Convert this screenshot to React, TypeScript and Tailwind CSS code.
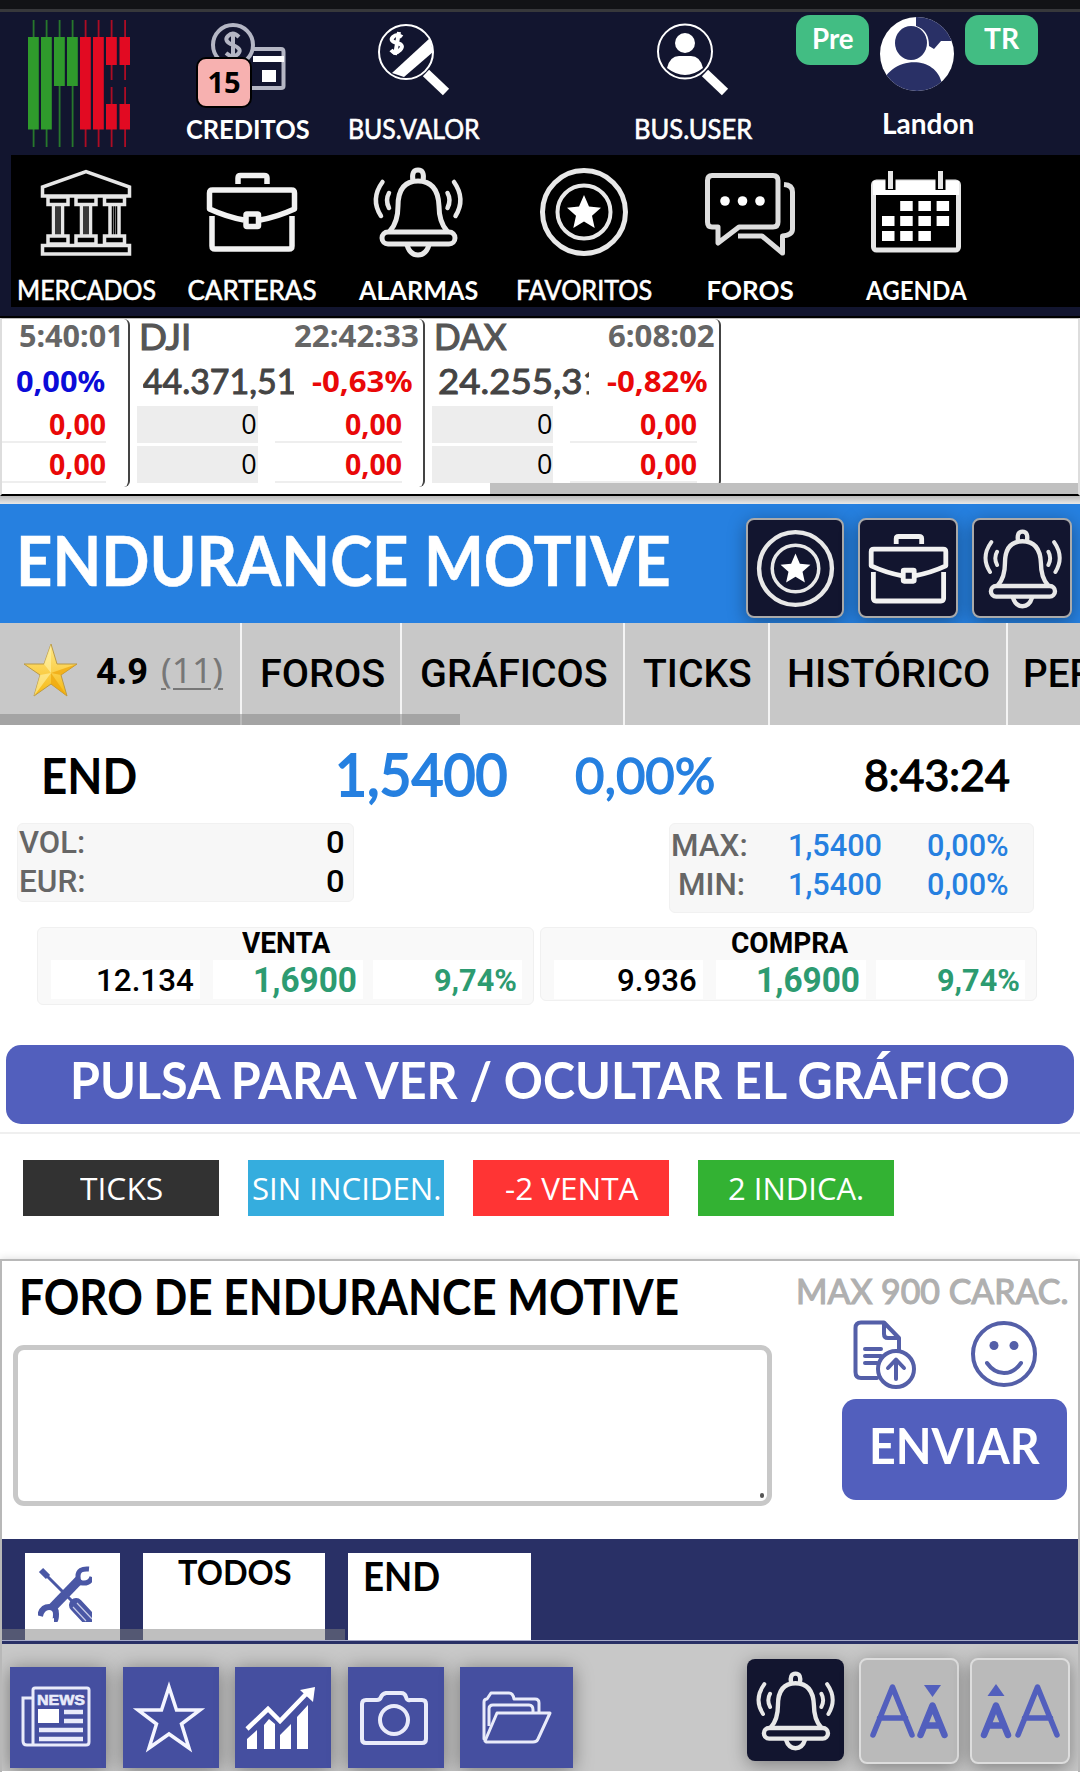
import { useLayoutEffect, useRef, useState, type ReactNode } from "react";

/* Single line of text, condensed or widened to fill a given width. */
function T({ w, className = "", children }: { w: number; className?: string; children: ReactNode }) {
  const ref = useRef<HTMLSpanElement>(null);
  const [k, setK] = useState(1);
  useLayoutEffect(() => {
    if (ref.current) setK(w / ref.current.offsetWidth);
  }, [w]);
  return (
    <div className={"shrink-0 whitespace-nowrap " + className} style={{ width: w }}>
      <span ref={ref} className="inline-block origin-left" style={{ transform: `scaleX(${k})` }}>
        {children}
      </span>
    </div>
  );
}

function Candles() {
  const xs = [28, 41, 54, 67, 80, 93, 106, 119.5];
  return (
    <svg className="h-[127px] w-[102px]" viewBox="28 20 102 127">
      {xs.map((x, i) => {
        const c = i < 4 ? "#2f9a2c" : "#e20a22";
        return (
          <g key={x} fill={c}>
            {i < 6 ? (
              <rect x={x + 4.7} y="20" width="1.8" height="127" opacity=".75" />
            ) : (
              <>
                <rect x={x + 4.7} y="20" width="1.8" height="60" opacity=".75" />
                <rect x={x + 4.7} y="87" width="1.8" height="60" opacity=".75" />
              </>
            )}
            {i < 6 ? (
              <rect x={x} y="37" width="10.8" height={i === 2 || i === 3 ? 49 : 92.5} />
            ) : (
              <>
                <rect x={x} y="37" width="10.8" height="28" />
                <rect x={x} y="104" width="10.8" height="25.5" />
              </>
            )}
          </g>
        );
      })}
    </svg>
  );
}

const box = "block h-full w-full overflow-visible";

function Bank() {
  return (
    <svg className={box} viewBox="0 0 90 90" fill="none" stroke="#e6e6e6" strokeWidth="3.5">
      <path d="M1.500 29V20L45 4.500 88.500 20V29Z" />
      {[6, 34, 62.5].map((x) => (
        <g key={x}>
          <rect x={x + 1} y="30" width="20" height="7.500" />
          <path d={`M${x + 6.5} 38V68M${x + 15.5} 38V68`} strokeWidth="3.500" />
          <path d={`M${x + 10} 38V68M${x + 12} 38V68`} strokeWidth="1" opacity=".5" />
          <rect x={x + 1} y="69" width="20" height="8" />
        </g>
      ))}
      <rect x="1.500" y="78.500" width="87" height="8.500" />
    </svg>
  );
}
function Briefcase() {
  return (
    <svg className={box} viewBox="0 0 90 90" fill="none" stroke="#f2f2f2" strokeWidth="5.5" strokeLinejoin="round">
      <path d="M31 17V11Q31 8.500 33.500 8.500H57Q60 8.500 60 11V17" />
      <path d="M37 53Q20 50 2.500 42V26Q2.500 23 5.500 23H84.500Q87.500 23 87.500 26V42Q70 50 53 53" />
      <path d="M5 49V79Q5 82 8 82H82Q85 82 85 79V49" />
      <rect x="39" y="47" width="12.500" height="12.500" rx="1" />
    </svg>
  );
}
function Bell() {
  return (
    <svg className={box} viewBox="0 0 90 90" fill="none" stroke="#e8e8e8" strokeWidth="5" strokeLinecap="round" strokeLinejoin="round">
      <path d="M40 14Q38 3 45 3T50 14" />
      <path d="M17 64Q25 55 25 39Q25 14 45 14T66 39Q66 55 74 64" />
      <rect x="9" y="65" width="73" height="12" rx="6" />
      <path d="M34 78Q37 88 45 88T56 78" />
      <path d="M9.500 15Q-3 32 8 49M16 26Q12 33 16 41M81 15Q93 32 82.500 49M74.500 26Q78.500 33 74.500 41" strokeWidth="4.500" />
    </svg>
  );
}
function Target() {
  return (
    <svg className={box} viewBox="0 0 90 90" fill="none" stroke="#e8e8e8">
      <circle cx="45" cy="45" r="41.500" strokeWidth="5" />
      <circle cx="45" cy="45" r="26.500" strokeWidth="4" />
      <path fill="#fff" stroke="none" d="M45 28l5 11.500 12 1.200-9 8 2.700 12.300L45 54.500 34.300 61 37 48.700l-9-8 12-1.200z" />
    </svg>
  );
}
function Chat() {
  return (
    <svg className={box} viewBox="0 0 90 90" fill="none" stroke="#dedede" strokeWidth="5" strokeLinejoin="round">
      <path d="M7 8.500H68Q73 8.500 73 13.500V55Q73 60 68 60H34L13 76V60H7Q2.500 60 2.500 55V13.500Q2.500 8.500 7 8.500Z" />
      <path d="M79 17.500Q87.500 18 87.500 25V62Q87.500 68 77.500 69V86L57 69H33" />
      <g fill="#fff" stroke="none">
        <circle cx="20" cy="34" r="4.800" />
        <circle cx="37.500" cy="34" r="4.800" />
        <circle cx="55" cy="34" r="4.800" />
      </g>
    </svg>
  );
}
function Agenda() {
  const cells = [[1, 0], [2, 0], [3, 0], [0, 1], [1, 1], [2, 1], [3, 1], [0, 2], [1, 2], [2, 2]];
  return (
    <svg className={box} viewBox="0 0 90 90" fill="none" stroke="#e6e6e6" strokeWidth="5">
      <rect x="2.500" y="15" width="85" height="68" rx="3" />
      <rect x="2" y="14" width="86" height="14" fill="#fff" stroke="none" />
      <path d="M19.500 4V23M69.500 4V23" stroke="#000" strokeWidth="10" />
      <path d="M19.500 4V22M69.500 4V22" strokeWidth="5" />
      {cells.map(([c, r]) => (
        <rect key={`${c}-${r}`} x={11 + c * 18.2} y={34 + r * 15} width="12.500" height="10" fill="#fff" stroke="none" />
      ))}
    </svg>
  );
}

const nav = [
  { label: "MERCADOS", w: 139, Icon: Bank, cls: "font-normal [-webkit-text-stroke:0.6px_currentColor]" },
  { label: "CARTERAS", w: 129, Icon: Briefcase, cls: "font-normal [-webkit-text-stroke:0.6px_currentColor]" },
  { label: "ALARMAS", w: 119, Icon: Bell, cls: "font-bold" },
  { label: "FAVORITOS", w: 136, Icon: Target, cls: "font-normal [-webkit-text-stroke:0.6px_currentColor]" },
  { label: "FOROS", w: 87, Icon: Chat, cls: "font-bold" },
  { label: "AGENDA", w: 101, Icon: Agenda, cls: "font-bold" },
];

function Header() {
  return (
    <header className="bg-[#12152f]">
      <div className="h-[9px] bg-[#121316]" />
      <div className="h-[3px] bg-[#37383b]" />
      <div className="flex h-[143px] text-white">
        <div className="ml-7 mt-2 w-[102px]">
          <Candles />
        </div>
        <div className="relative ml-[56px] flex w-[124px] flex-col items-center">
          <div className="h-[100px] w-[76px] pt-[10px]">
            <svg className="h-[70px] w-[76px]" viewBox="210 22 76 70" fill="none" stroke="#b4b6c4" strokeWidth="4">
              <circle cx="233" cy="45" r="20" />
              <path d="M239 37Q233 31 228 36T233 45T238 54T226 53M233 32V58" strokeWidth="4" />
              <path d="M254 49H281Q283.500 49 283.500 52V86Q283.500 88 281 88H230" />
              <path d="M253 59H284" stroke="#fff" strokeWidth="6" />
              <rect x="262" y="70" width="14" height="12" fill="#fff" stroke="none" />
            </svg>
          </div>
          <T w={124} className="font-['Lato',sans-serif] text-[26px] leading-[34px] font-bold">CREDITOS</T>
          <div className="absolute left-[10px] top-[45px] flex h-[51px] w-[56px] items-center justify-center rounded-[10px] border-2 border-black bg-[#f7b1b0] pb-[2px] font-['Noto_Sans',sans-serif] text-[29px] leading-none font-bold text-black">
            15
          </div>
        </div>
        <div className="ml-[38px] flex w-[132px] flex-col items-center">
          <div className="h-[100px] w-[74px] pt-[11px]">
            <svg className="h-[74px] w-[74px]" viewBox="378 23 74 74" fill="none" stroke="#fff" strokeWidth="2">
              <circle cx="407" cy="52" r="27" />
              <path d="M431 38L434 52 405 77 393 73Z" fill="#fff" stroke="none" />
              <path d="M427 73L447 92" strokeWidth="9" />
              <path d="M403 37Q398 33 394 37T398 43T401 50T392 50M400 32L396 55" strokeWidth="4" />
            </svg>
          </div>
          <T w={132} className="font-['Lato',sans-serif] text-[26px] leading-[34px] [-webkit-text-stroke:0.6px_currentColor]">BUS.VALOR</T>
        </div>
        <div className="ml-[154px] flex w-[118px] flex-col items-center">
          <div className="h-[100px] w-[74px] pt-[11px]">
            <svg className="h-[74px] w-[74px]" viewBox="657 23 74 74" fill="none" stroke="#fff" strokeWidth="2">
              <circle cx="686" cy="51.500" r="27" />
              <circle cx="686" cy="43" r="10" fill="#fff" stroke="none" />
              <path d="M668 68Q671 56 680 56H692Q701 56 704 68Q686 82 668 68Z" fill="#fff" stroke="none" />
              <path d="M706 73L726 92" strokeWidth="9" />
            </svg>
          </div>
          <T w={118} className="font-['Lato',sans-serif] text-[26px] leading-[34px] [-webkit-text-stroke:0.6px_currentColor]">BUS.USER</T>
        </div>
        <div className="ml-[44px] flex w-[242px] flex-col items-center">
          <div className="flex h-[95px] w-full items-start justify-between pt-[3px]">
            <div className="flex h-[50px] w-[73px] justify-center rounded-[14px] bg-[#42bd83] pt-[6px]">
              <T w={42} className="font-['Lato',sans-serif] text-[29px] leading-[34px] font-bold">Pre</T>
            </div>
            <svg className="mt-[2px] h-[74px] w-[74px] rounded-full bg-white" viewBox="880 17 74 74">
              <g fill="#293066">
                <ellipse cx="911" cy="43" rx="16" ry="17" />
                <path d="M880 91C885 56 936 52 942 84L946 91Z" />
                <path d="M916 17V26Q929 30 929 46L934 49 941 41H954V17Z" />
              </g>
            </svg>
            <div className="flex h-[50px] w-[73px] justify-center rounded-[14px] bg-[#42bd83] pt-[6px]">
              <T w={35} className="font-['Lato',sans-serif] text-[29px] leading-[34px] font-bold">TR</T>
            </div>
          </div>
          <T w={92} className="ml-[22px] -mt-[1px] font-['Lato',sans-serif] text-[28px] leading-[34px] font-bold">Landon</T>
        </div>
      </div>
      <nav className="ml-[11px] h-[152px] bg-black">
        <div className="-ml-2 flex pt-3">
          {nav.map(({ label, w, Icon, cls }) => (
            <div key={label} className="flex w-[166px] shrink-0 flex-col items-center text-white">
              <div className="h-[90px] w-[90px]">
                <Icon />
              </div>
              <T w={w} className={"mt-4 font-['Lato',sans-serif] text-[26px] leading-[34px] " + cls}>{label}</T>
            </div>
          ))}
        </div>
      </nav>
      <div className="h-[9px]" />
      <div className="h-[2px] bg-black" />
    </header>
  );
}

function Quote({ name, nameW, time, timeW, value, valueW, pct, pctW, pctCls }: {
  name: string; nameW: number; time: string; timeW: number; value: string; valueW: number; pct: string; pctW: number; pctCls: string;
}) {
  return (
    <div className="h-[168px] w-[295.700px] shrink-0 rounded-r-md border-r-2 border-[#444] font-['Noto_Sans',sans-serif] font-bold">
      <div className="flex h-[34px] items-center pl-[9px] pr-[4px]">
        {name && <T w={nameW} className="font-['Lato',sans-serif] text-[36px] leading-[34px] font-normal text-[#555] [-webkit-text-stroke:1.2px_currentColor]">{name}</T>}
        <T w={timeW} className="ml-auto text-[30px] leading-[34px] text-[#666]">{time}</T>
      </div>
      <div className="flex h-[53px] items-center pl-[13px] pt-[2px]">
        <div className="w-[151px] overflow-hidden">
          {value && <T w={valueW} className="font-['Lato',sans-serif] text-[34px] leading-[46px] font-normal text-[#444] [-webkit-text-stroke:1px_currentColor]">{value}</T>}
        </div>
        <T w={pctW} className={"ml-[18px] text-[29px] leading-[48px] " + pctCls}>{pct}</T>
      </div>
      {[0, 1].map((i) => (
        <div key={i} className="mb-[3px] flex h-[37px]">
          <div className="ml-[7px] w-[121px] bg-[#ededed] pr-[1px] text-right font-['Open_Sans',sans-serif] text-[27px] leading-[36px] font-normal text-black">{name && "0"}</div>
          <div className="ml-[17px] w-[127px] border-b-2 border-[#eee] text-right text-[29px] leading-[35px] text-[#e90808]">
            <T w={57} className="ml-auto">0,00</T>
          </div>
        </div>
      ))}
    </div>
  );
}

function Ticker() {
  return (
    <>
      <section className="relative flex h-[178px] overflow-hidden border-x-2 border-b-2 border-t border-x-[#ddd] border-b-black border-t-[#bbb] bg-white">
        <div className="-ml-[168px] flex">
          <Quote name="" nameW={0} time="5:40:01" timeW={105} value="" valueW={0} pct="0,00%" pctW={89} pctCls="text-[#0b0bd8]" />
          <Quote name="DJI" nameW={52} time="22:42:33" timeW={125} value="44.371,51" valueW={154} pct="-0,63%" pctW={100} pctCls="text-[#e90808]" />
          <Quote name="DAX" nameW={72} time="6:08:02" timeW={107} value="24.255,31" valueW={166} pct="-0,82%" pctW={100} pctCls="text-[#e90808]" />
        </div>
        <div className="absolute bottom-0 right-0 h-[11px] w-[588px] bg-[#c0c0c0]" />
      </section>
      <div className="h-2 bg-linear-to-b from-[#bbb] to-[#e8e8e8]" />
    </>
  );
}

function NavyButton({ children, className = "" }: { children: ReactNode; className?: string }) {
  return (
    <div className={"flex shrink-0 items-center justify-center rounded-lg bg-[#12152f] shadow-[0_4px_18px_rgba(0,0,0,0.35)] " + className}>
      <div className="h-[79px] w-[79px]">{children}</div>
    </div>
  );
}

function TitleBar() {
  return (
    <section className="flex h-[119px] bg-[#2680e0] pt-[14px] text-white">
      <T w={655} className="ml-[16px] mt-[2px] font-['Lato',sans-serif] text-[69px] leading-[80px] font-bold [-webkit-text-stroke:0.5px_currentColor]">ENDURANCE MOTIVE</T>
      <NavyButton className="ml-[75px] h-[100px] w-[98px] border-2 border-[#aaa]"><Target /></NavyButton>
      <NavyButton className="ml-[14px] h-[100px] w-[100px] border-2 border-[#aaa]"><Briefcase /></NavyButton>
      <NavyButton className="ml-[14px] h-[100px] w-[100px] border-2 border-[#aaa]"><Bell /></NavyButton>
    </section>
  );
}

function Tabs() {
  const tab = "flex h-full shrink-0 items-center justify-center border-r-2 border-[#f4f4f4] pb-[1px] ";
  return (
    <section className="relative flex h-[102px] overflow-hidden bg-[#c8c8c8] font-['Roboto',sans-serif] text-[38px] leading-[44px] font-medium text-black">
      <div className="flex h-full w-[242px] shrink-0 items-center border-r-2 border-[#f4f4f4]">
        <svg className="-mt-[9px] ml-[23px] h-[54px] w-[55px]" viewBox="0 0 55 54">
          <defs>
            <linearGradient id="gold" x1="0" y1="0" x2="0" y2="1">
              <stop offset="0" stopColor="#ffe98a" />
              <stop offset="1" stopColor="#f6b913" />
            </linearGradient>
          </defs>
          <path d="M28 1L34 21 54 21 38 32 44 53 28 41 11 53 17 32 1 21 21 21Z" fill="url(#gold)" stroke="#bb9a45" strokeWidth="1" strokeLinejoin="round" />
          <path d="M28 1V30L21 21ZM28 30L17 32 11 53Z" fill="#fff3a8" opacity=".6" />
          <path d="M28 30L54 21 38 32ZM28 30L44 53 28 41Z" fill="#eea50a" opacity=".7" />
        </svg>
        <T w={52} className="-mt-[4px] ml-[18px] text-[37px] font-bold">4.9</T>
        <T w={62} className="-mt-[8px] ml-[13px] font-['Noto_Sans',sans-serif] text-[35px] font-normal text-[#777]">
          <span className="underline decoration-2 underline-offset-[5px]">(11)</span>
        </T>
      </div>
      <div className={tab + "w-[160px] pl-[2px]"}><T w={125}>FOROS</T></div>
      <div className={tab + "w-[223px] pl-[2px]"}><T w={188}>GRÁFICOS</T></div>
      <div className={tab + "w-[145px] pl-[1px]"}><T w={109}>TICKS</T></div>
      <div className={tab + "w-[238px]"}><T w={203}>HISTÓRICO</T></div>
      <div className="flex h-full shrink-0 items-center pb-[1px] pl-[15px]"><T w={124}>PERFIL</T></div>
      <div className="absolute bottom-0 left-0 h-[11px] w-[460px] bg-[#808080]/50" />
    </section>
  );
}

function Level({ side, sideW, vol, volW, className }: { side: string; sideW: number; vol: string; volW: number; className: string }) {
  return (
    <div className={"w-[497px] rounded-md border border-[#f0f0f0] bg-[#f9f9f9] pl-[13px] " + className}>
      <div className="flex h-[32px] justify-center pr-[12px]">
        <T w={sideW} className="text-[29px] leading-[30px] font-bold">{side}</T>
      </div>
      <div className="flex h-[39px] items-center leading-[39px]">
        <div className="flex h-full w-[149px] justify-end bg-white pr-[6px]"><T w={volW} className="text-[32px] leading-[40px]">{vol}</T></div>
        <div className="ml-[13px] flex h-full w-[150px] justify-end bg-white pr-[6px] font-bold text-[#2d9b71]"><T w={104} className="text-[35px] leading-[41px]">1,6900</T></div>
        <div className="ml-[10px] flex h-full w-[149px] justify-end bg-white pr-[5px] font-bold text-[#2d9b71]"><T w={83} className="text-[31px] leading-[41px]">9,74%</T></div>
      </div>
    </div>
  );
}

function Prices() {
  return (
    <section className="h-[320px] font-['Roboto',sans-serif] font-medium text-black">
      <div className="flex h-[98px] items-center pt-[2px] font-['Lato',sans-serif] leading-[60px]">
        <T w={96} className="ml-[41px] text-[50px] font-bold">END</T>
        <T w={172} className="ml-[198px] -mt-[2px] text-[58px] font-normal text-[#2680e0] [-webkit-text-stroke:2px_currentColor]">1,5400</T>
        <T w={140} className="ml-[68px] text-[50px] font-normal text-[#2680e0] [-webkit-text-stroke:1.3px_currentColor]">0,00%</T>
        <T w={146} className="ml-[149px] text-[42px] font-normal [-webkit-text-stroke:1.3px_currentColor]">8:43:24</T>
      </div>
      <div className="flex items-start">
        <div className="ml-[17px] h-[79px] w-[337px] rounded-md border border-[#f1f1f1] bg-[#f7f7f7] pl-[1px] pr-[8px] text-[31px] leading-[39px] text-[#666]">
          <div className="-mt-[1px] flex justify-between"><T w={66}>VOL:</T><T w={19} className="text-black">0</T></div>
          <div className="flex justify-between"><T w={66}>EUR:</T><T w={19} className="text-black">0</T></div>
        </div>
        <div className="ml-[315px] h-[90px] w-[365px] rounded-md border border-[#f1f1f1] bg-[#f7f7f7] pt-[2px] text-[31px] leading-[39px] text-[#2680e0]">
          <div className="flex">
            <T w={77} className="ml-[1px] text-[#666]">MAX:</T><T w={94} className="ml-[40px]">1,5400</T><T w={82} className="ml-[45px]">0,00%</T>
          </div>
          <div className="flex">
            <T w={67} className="ml-[8px] text-[#666]">MIN:</T><T w={94} className="ml-[43px]">1,5400</T><T w={82} className="ml-[45px]">0,00%</T>
          </div>
        </div>
      </div>
      <div className="mt-[14px] flex items-start">
        <Level side="VENTA" sideW={88} vol="12.134" volW={98} className="ml-[37px] h-[78px]" />
        <Level side="COMPRA" sideW={117} vol="9.936" volW={80} className="ml-[6px] h-[74px]" />
      </div>
    </section>
  );
}

const chips = [
  { t: "TICKS", w: 83, c: "bg-[#323232]" },
  { t: "SIN INCIDEN.", w: 189, c: "bg-[#35adde]" },
  { t: "-2 VENTA", w: 133, c: "bg-[#ff3434]" },
  { t: "2 INDICA.", w: 136, c: "bg-[#33b233]" },
];

function FileUp() {
  return (
    <svg className="h-[70px] w-[64px]" viewBox="0 0 64 70" fill="none" stroke="#545fa8" strokeWidth="4" strokeLinecap="round" strokeLinejoin="round">
      <path d="M24 58H8Q2.500 58 2.500 52V8Q2.500 2.500 8 2.500H31L46 18V30M31 3V14Q31 18 35 18H45" />
      <path d="M12 29H28M12 36H28M12 43H24" />
      <circle cx="43" cy="49" r="18" fill="#fff" />
      <path d="M43 59V40M35 48L43 39.500 51 48" />
    </svg>
  );
}
function Smiley() {
  return (
    <svg className="h-[68px] w-[68px]" viewBox="0 0 68 68" fill="none" stroke="#545fa8" strokeWidth="4" strokeLinecap="round">
      <circle cx="34" cy="34" r="31" />
      <circle cx="24" cy="25.500" r="4.500" fill="#545fa8" stroke="none" />
      <circle cx="44" cy="25.500" r="4.500" fill="#545fa8" stroke="none" />
      <path d="M17 43Q24 53 34 53T51 43" />
    </svg>
  );
}

function Forum() {
  return (
    <section className="relative flex-1 border-x-2 border-t-2 border-[#b8b8b8] bg-white shadow-[0_0_8px_rgba(0,0,0,0.15)]">
      <div className="flex h-[278px] justify-between">
        <div className="pl-[11px]">
          <T w={660} className="ml-[6px] mt-[5px] font-['Lato',sans-serif] text-[49px] leading-[60px] font-bold text-black">FORO DE ENDURANCE MOTIVE</T>
          <div className="relative mt-[19px] h-[161px] w-[759px] rounded-[11px] border-[5px] border-[#c8c8c8]">
            <div className="absolute bottom-[3px] right-[3px] h-[5px] w-[4px] rounded bg-[#555]" />
          </div>
        </div>
        <div className="mr-[11px] w-[274px]">
          <T w={272} className="ml-[3px] mt-[13px] font-['Lato',sans-serif] text-[34px] leading-[34px] font-normal text-[#b0b0b0] [-webkit-text-stroke:1.2px_currentColor]">MAX 900 CARAC.</T>
          <div className="mt-[10px] flex h-[80px]">
            <div className="ml-[60px] mt-[2px]"><FileUp /></div>
            <div className="ml-[53px] mt-[2px]"><Smiley /></div>
          </div>
          <div className="ml-[49px] mt-[1px] flex h-[101px] w-[225px] justify-center rounded-[14px] bg-[#525fbd] pt-[16px]">
            <T w={171} className="font-['Lato',sans-serif] text-[50px] leading-[60px] font-bold text-white">ENVIAR</T>
          </div>
        </div>
      </div>
      <div className="relative flex h-[101px] bg-[#293066] pt-[14px] font-['Lato',sans-serif] font-bold text-black">
        <div className="ml-[23px] w-[95px] bg-white pl-[13px] pt-[13px]">
          <svg className="h-[56px] w-[54px]" viewBox="0 0 54 56">
            <g fill="none" stroke="#4a57a5">
              <path d="M3 4L10 11" strokeWidth="6" />
              <path d="M8 9L34 35" strokeWidth="3" />
              <path d="M14 42L42 13" strokeWidth="9" />
              <path d="M51 3Q40 2 40 10T46 17Q52 17 54 11" strokeWidth="5" />
              <path d="M2 50Q4 41 11 41T18 48T16 55" strokeWidth="6" />
              <path d="M38 39L52 54" strokeWidth="14" strokeLinecap="round" />
              <path d="M39 37L54 53M35 41L48 55" stroke="#c8cce8" strokeWidth="1.200" />
            </g>
          </svg>
        </div>
        <div className="ml-[23px] w-[182px] bg-white pl-[35px]">
          <T w={114} className="text-[35px] leading-[37px]">TODOS</T>
        </div>
        <div className="ml-[23px] w-[183px] bg-white pl-[15px]">
          <T w={77} className="text-[40px] leading-[46px]">END</T>
        </div>
        <div className="absolute bottom-0 left-0 h-[11px] w-[343px] bg-[#808080]/50" />
      </div>
      <div className="h-[1px] bg-[#a7abc9]" />
      <div className="h-[3px] bg-[#293066]" />
      <Toolbar />
    </section>
  );
}

const sq = "flex h-[101px] shrink-0 items-center justify-center bg-[#454fa0] pb-[4px] shadow-[0_2px_18px_rgba(0,0,0,0.4)] ";
const ic = "block h-[68px] w-[68px] overflow-visible";

function LetterButton({ flip }: { flip?: boolean }) {
  const big = <path d={flip ? "M37 51L56.500 3 76 51M43.500 34H69.500" : "M3 51L22.500 3 42 51M9.500 34H35.500"} strokeWidth="5.500" />;
  return (
    <div className="ml-[11px] flex h-[106px] w-[100px] shrink-0 items-center justify-center rounded-lg border-2 border-[#ddd] bg-[#bababa] shadow-[0_4px_18px_rgba(0,0,0,0.35)]">
      <svg className="h-[54px] w-[78px] overflow-visible" viewBox="0 0 78 54" fill="none" stroke="#525fbd" strokeLinecap="round" strokeLinejoin="round">
        {big}
        <g transform={flip ? "translate(-47.5 0)" : undefined}>
          <path d="M50.500 51L62.500 21.500 74.500 51M55 41.500H70" strokeWidth="6.500" />
          <path d={flip ? "M54 12L62.500 0 71 12Z" : "M54 1L62.500 13 71 1Z"} fill="#525fbd" stroke="none" />
        </g>
      </svg>
    </div>
  );
}

function Toolbar() {
  return (
    <div className="flex h-[127px] items-start overflow-hidden bg-[#c8c8c8] pt-[14px]">
      <div className="mt-[9px] flex pl-[8px]">
        <div className={sq + "w-[96px] pr-[5px]"}>
          <svg className={ic} viewBox="0 0 68 68" fill="none" stroke="#e9ebfa" strokeWidth="3">
            <path d="M11 62V8Q11 6 13 6H65Q67 6 67 8V60Q67 63 64 63H5Q1 63 1 59V16H11V57" />
            <text x="15" y="23" fill="#e9ebfa" stroke="#e9ebfa" strokeWidth=".6" fontFamily="Liberation Sans" fontWeight="700" fontSize="15" textLength="48" lengthAdjust="spacingAndGlyphs">NEWS</text>
            <rect x="16" y="27" width="21" height="14" fill="#fff" stroke="none" />
            <path d="M42 30H61M42 39H61M17 48H61M17 57H61" strokeWidth="4.500" />
          </svg>
        </div>
        <div className={sq + "ml-[17px] w-[96px] pr-[5px]"}>
          <svg className={ic} viewBox="0 0 68 68" fill="none" stroke="#f4f5ff" strokeWidth="3.5">
            <path d="M34 5L41.500 28H65L46.500 42 54 66 34 52 14 66 21.500 42 3 28H26.500Z" />
          </svg>
        </div>
        <div className={sq + "ml-[16px] w-[96px] pr-[5px]"}>
          <svg className={ic} viewBox="0 0 68 68" fill="#fff">
            <path d="M0 57L10 48V67H0ZM17 43L22 37 28 42V67H17ZM33 53L44 42V67H33ZM50 35L61 23V67H50Z" />
            <path d="M0 47L21 27 33 39 61 10" fill="none" stroke="#fff" strokeWidth="4.500" />
            <path d="M53 8L68 5 66 20Z" />
          </svg>
        </div>
        <div className={sq + "ml-[17px] w-[96px] pr-[5px]"}>
          <svg className={ic} viewBox="0 0 68 68" fill="none" stroke="#e9ebfa" strokeWidth="4">
            <path d="M6 18H17Q20 18 21 15T26 11H41Q45 11 46 15T50 18H62Q66 18 66 22V57Q66 61 62 61H6Q2 61 2 57V22Q2 18 6 18Z" />
            <circle cx="34" cy="38" r="14" />
          </svg>
        </div>
        <div className={sq + "ml-[16px] w-[113px]"}>
          <svg className={ic} viewBox="0 0 68 68" fill="none" stroke="#e9ebfa" strokeWidth="3" strokeLinejoin="round">
            <path d="M3 58L1 57V20Q1 17 4 17L8 11H26Q30 11 31 17H52Q56 17 56 21V30" />
            <path d="M6 44V27Q6 23 10 23H46Q50 23 50 28V31" />
            <path d="M2 59L14 31H67L55 57Q54 60 50 60H3Z" />
          </svg>
        </div>
      </div>
      <NavyButton className="ml-[174px] mt-[1px] h-[102px] w-[97px]"><Bell /></NavyButton>
      <div className="flex pl-[4px]">
        <LetterButton />
        <LetterButton flip />
      </div>
    </div>
  );
}

export default function App() {
  return (
    <div className="flex h-[1772px] w-[1080px] flex-col overflow-hidden bg-white">
      <Header />
      <Ticker />
      <TitleBar />
      <Tabs />
      <Prices />
      <div className="mx-[6px] flex h-[79px] shrink-0 justify-center rounded-[15px] bg-[#525fbd] pt-[4px]">
        <T w={940} className="font-['Lato',sans-serif] text-[52px] leading-[60px] font-bold text-white">PULSA PARA VER / OCULTAR EL GRÁFICO</T>
      </div>
      <div className="mt-2 h-[2px] shrink-0 bg-[#efefef]" />
      <div className="mt-[26px] flex shrink-0 gap-[29px] pl-[23px]">
        {chips.map(({ t, w, c }) => (
          <div key={t} className={"flex h-[56px] w-[196px] justify-center text-white " + c}>
            <T w={w} className="font-['Open_Sans',sans-serif] text-[31px] leading-[56px]">{t}</T>
          </div>
        ))}
      </div>
      <div className="h-[43px] shrink-0" />
      <Forum />
    </div>
  );
}
